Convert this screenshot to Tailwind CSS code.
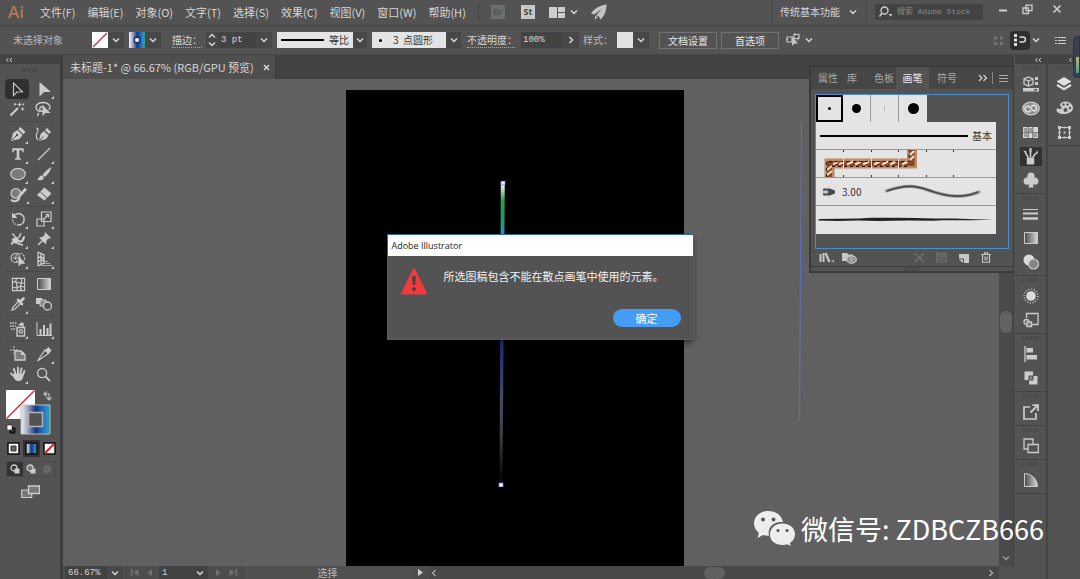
<!DOCTYPE html>
<html lang="zh-CN">
<head>
<meta charset="utf-8">
<meta name="viewport" content="width=device-width, initial-scale=1">
<title>Adobe Illustrator</title>
<script src="https://cdn.jsdelivr.net/npm/@tailwindcss/browser@4"></script>
</head>
<body class="flex h-screen flex-col overflow-hidden bg-[#535353] font-['Noto_Sans_CJK_SC',sans-serif] text-[10px] leading-4 text-[#d6d6d6]">

<svg class="absolute size-0" aria-hidden="true">
  <defs>
    <linearGradient id="g-gray" x1="0" x2="1"><stop offset="0" stop-color="#4a4a4a"/><stop offset="1" stop-color="#d8d8d8"/></linearGradient>
    <linearGradient id="g-blue" x1="0" x2="1"><stop offset="0" stop-color="#f2f2f2"/><stop offset=".2" stop-color="#a9b4c6"/><stop offset=".5" stop-color="#16377e"/><stop offset=".8" stop-color="#2a78c8"/><stop offset=".92" stop-color="#2a94cc"/><stop offset="1" stop-color="#1eaa5c"/></linearGradient>
    <linearGradient id="g-rope" x1="0" y1="0" x2="0" y2="1"><stop offset="0" stop-color="#fff"/><stop offset=".06" stop-color="#2a9a50"/><stop offset=".1" stop-color="#1f9c5a"/><stop offset=".17" stop-color="#2a8fc4"/><stop offset=".4" stop-color="#2458a8"/><stop offset=".55" stop-color="#1f2f73"/><stop offset=".72" stop-color="#474a66"/><stop offset=".85" stop-color="#3c3c3f"/><stop offset=".97" stop-color="#0a0a0a"/></linearGradient>
  </defs>
  <symbol id="chev" viewBox="0 0 10 10"><path d="M2 3.500l3 3 3-3" fill="none" stroke="currentColor" stroke-width="1.500"/></symbol>
  <symbol id="chev-r" viewBox="0 0 10 10"><path d="M3.500 2l3 3-3 3" fill="none" stroke="currentColor" stroke-width="1.500"/></symbol>
  <symbol id="chev-l" viewBox="0 0 10 10"><path d="M6.500 2l-3 3 3 3" fill="none" stroke="currentColor" stroke-width="1.300"/></symbol>
  <symbol id="dbl" viewBox="0 0 10 6"><path d="M4.500 1l-2 2 2 2M8 1L6 3l2 2" fill="none" stroke="currentColor"/></symbol>
  <symbol id="grip" viewBox="0 0 16 4"><path d="M0 1h16M0 3h16" stroke="#3c3c3c" stroke-dasharray="1 1"/></symbol>
  <symbol id="tri" viewBox="0 0 4 4"><path d="M4 0v4H0z" fill="currentColor"/></symbol>

  <symbol id="t-sel" viewBox="0 0 16 16"><path d="M4.500 2v12.500l3.500-3.500 5.500-.2z" fill="none" stroke="currentColor" stroke-width="1.100"/></symbol>
  <symbol id="t-dir" viewBox="0 0 16 16"><path d="M3.500 1v14.500l4.500-4.500h7z" fill="currentColor"/></symbol>
  <symbol id="t-wand" viewBox="0 0 16 16"><path d="M1.500 14.500L9 7" stroke="currentColor" stroke-width="2.200"/><path d="M10.500 1.500v4M8.500 3.500h4M13.500 6.500v3M12 8h3M6 2v2.600M4.700 3.300h2.600M13.500 2.500l1.500 1.500" stroke="currentColor" stroke-width="1.100"/></symbol>
  <symbol id="t-lasso" viewBox="0 0 16 16"><path d="M4 12c-1 1-2 2-1 3M8 10c-5 1-7-1-7-4 0-3 4-4.500 7-4.500S15 3 15 6c0 1-.5 2-1.500 2.500M5.500 10.500c-2-3 0-5.500 3-5" fill="none" stroke="currentColor" stroke-width="1.400"/><path d="M7.500 4v11l3-3H15.500z" fill="currentColor"/></symbol>
  <symbol id="t-pen" viewBox="0 0 16 16"><path d="M1 15l2-8 4.500-3L12.500 9 9.500 13z" fill="currentColor"/><path d="M8.300 3.200L10.500 1 15.500 6l-2.200 2.200z" fill="currentColor"/><path d="M1.500 14.500l5-5" stroke="#535353" stroke-width="1"/><circle cx="7" cy="9" r="1.200" fill="#535353"/></symbol>
  <symbol id="t-curv" viewBox="0 0 16 16"><path d="M4 15l1.500-7 3.500-3 4.500 4.500-2.500 3.500z" fill="currentColor"/><path d="M10 4l2-2 4 4-2 2z" fill="currentColor"/><path d="M4.500 14.500l4-4" stroke="#535353"/><path d="M1 2c3 0 2 3 1 5s-1 5 1 7" fill="none" stroke="currentColor" stroke-width="1.200"/></symbol>
  <symbol id="t-type" viewBox="0 0 16 16"><path d="M1.500 1.500h13v4.500h-1.500L12.500 3.700H9.500v9l2 .5v1.300h-7v-1.300l2-.5v-9H3.500L3 6H1.500z" fill="currentColor"/></symbol>
  <symbol id="t-line" viewBox="0 0 16 16"><path d="M2 14L14 2" stroke="currentColor" stroke-width="1.300"/></symbol>
  <symbol id="t-ell" viewBox="0 0 16 16"><ellipse cx="8" cy="8" rx="7.300" ry="5.700" fill="#7c7c7c" stroke="currentColor" stroke-width="1.200"/></symbol>
  <symbol id="t-brush" viewBox="0 0 16 16"><path d="M15.500 1c-3 1.500-6.500 4.500-9 8l2.500 2c3-3 5.500-6 6.500-10z" fill="currentColor"/><path d="M6 9.500c-3-.5-2.500 3-5 4 2 1.500 6.500 1 7-2z" fill="currentColor"/></symbol>
  <symbol id="t-shaper" viewBox="0 0 16 16"><circle cx="5.500" cy="7" r="4.500" fill="#7c7c7c" stroke="currentColor" stroke-width="1.200"/><path d="M15 2.500L8 10.500" stroke="currentColor" stroke-width="2.600"/><path d="M1 13c3 2 6 2 8-2" fill="none" stroke="currentColor" stroke-width="2"/></symbol>
  <symbol id="t-eraser" viewBox="0 0 16 16"><path d="M8.500 1.500L15.500 7.500 8.500 14.500 1 9z" fill="currentColor"/><path d="M4.500 6l6.500 5.800" stroke="#535353" stroke-width="1"/></symbol>
  <symbol id="t-rot" viewBox="0 0 16 16"><path d="M3.500 5.500A5.700 5.700 0 1 1 8 14" fill="none" stroke="currentColor" stroke-width="1.500"/><path d="M8 14a5.700 5.700 0 0 1-5.500-6" fill="none" stroke="currentColor" stroke-width="1.500" stroke-dasharray="1.200 1.200"/><path d="M2 1.500v5.500h5.500z" fill="currentColor"/></symbol>
  <symbol id="t-scale" viewBox="0 0 16 16"><path d="M5.500 1h9.500v9.500H5.500zM1 8h7v7H1z" fill="none" stroke="currentColor" stroke-width="1.200"/><path d="M8 8l4-4M9.500 3.500h3v3" fill="none" stroke="currentColor" stroke-width="1.200"/></symbol>
  <symbol id="t-warp" viewBox="0 0 16 16"><path d="M1 13c3-1 2-4 5-4s3 3 6 1 0-4 3-4" fill="none" stroke="currentColor" stroke-width="2.200"/><path d="M2 3c3 0 2 4 5 4s3-3 4-5M2 8c3 1 3 5 11 6" fill="none" stroke="currentColor" stroke-width="1.500"/><circle cx="5.500" cy="9.500" r="3" fill="currentColor"/></symbol>
  <symbol id="t-pin" viewBox="0 0 16 16"><path d="M9 1l6 6-2.500.5-2 2-.5 4L3 6.500l3.500-.5 2-2z" fill="currentColor"/><path d="M6.500 9.500L2 14" stroke="currentColor" stroke-width="1.500"/></symbol>
  <symbol id="t-build" viewBox="0 0 16 16"><circle cx="5.500" cy="7" r="4.500" fill="none" stroke="currentColor" stroke-width="1.100"/><circle cx="10" cy="7" r="4.500" fill="none" stroke="currentColor" stroke-width="1.100" stroke-dasharray="2 1"/><path d="M3 7h6" stroke="currentColor"/><path d="M8.500 5v10.500l2.800-2.800H15.500z" fill="currentColor"/></symbol>
  <symbol id="t-persp" viewBox="0 0 16 16"><path d="M2 1v14M2 1l6 3v8l-6 3M5 2.500v11M2 6l6 1M2 10.500L8 9" fill="none" stroke="currentColor" stroke-width="1.300"/><path d="M8 10.500h4M7 12.500h7M5 14.500h11" stroke="currentColor" stroke-width="1" stroke-opacity=".7"/></symbol>
  <symbol id="t-mesh" viewBox="0 0 16 16"><path d="M1.500 1.500h13v13h-13zM1.500 6c4-3 8 3 13 0M1.500 11c4 2 8-3 13 0M6 1.500c-3 4 3 8 0 13M11 1.500c2 4-3 8 0 13" fill="none" stroke="currentColor" stroke-width="1.200"/></symbol>
  <symbol id="t-grad" viewBox="0 0 16 16"><path d="M1.500 2.500h13v11h-13z" fill="url(#g-gray)" stroke="currentColor" stroke-width="1"/></symbol>
  <symbol id="t-eye" viewBox="0 0 16 16"><path d="M2 14l1-3 6-6 2 2-6 6z" fill="none" stroke="currentColor" stroke-width="1.200"/><path d="M8 4l4 4M10.500 5.500l3-3" stroke="currentColor" stroke-width="2.600" stroke-linecap="round"/></symbol>
  <symbol id="t-blend" viewBox="0 0 16 16"><path d="M0 2h6v6H0z" fill="currentColor"/><path d="M4 4h6v6H4z" fill="#8a8a8a" stroke="currentColor"/><circle cx="11.500" cy="10" r="4" fill="#535353" stroke="currentColor" stroke-width="1.300"/></symbol>
  <symbol id="t-spray" viewBox="0 0 16 16"><path d="M7 6.500h7.500V15H7zM8.500 4h4.500v2M10 2.500h3V4" fill="none" stroke="currentColor" stroke-width="1.400"/><circle cx="10.800" cy="10.500" r="1.600" fill="none" stroke="currentColor" stroke-width="1.200"/><path d="M0 2h7M0 5h6M1 8h4" stroke="currentColor" stroke-width="1.500" stroke-dasharray="1.500 1"/></symbol>
  <symbol id="t-graph" viewBox="0 0 16 16"><path d="M1 1v13.500h15" fill="none" stroke="currentColor"/><path d="M4.500 14V8M8 14V4M11.500 14V7M14.500 14V2.500" stroke="currentColor" stroke-width="2"/></symbol>
  <symbol id="t-art" viewBox="0 0 16 16"><path d="M4 0v9M0 4h8" stroke="currentColor" stroke-dasharray="2 1"/><path d="M5 5h6l4 3.500V14H5z" fill="#7c7c7c" stroke="currentColor" stroke-width="1.300"/><path d="M11 5v4h4" fill="currentColor"/></symbol>
  <symbol id="t-slice" viewBox="0 0 16 16"><path d="M1.500 15L9 4l3.500 3.500z" fill="none" stroke="currentColor" stroke-width="1.200"/><path d="M9.500 4l3-3 3 3.500-2.500 3z" fill="currentColor"/></symbol>
  <symbol id="t-hand" viewBox="0 0 16 16"><path d="M4 10L1 7.500M5.500 8L4 3M8 8V1.500M10.300 8l1.200-5.500M12.500 9.500l2-4.500" stroke="currentColor" stroke-width="1.900" stroke-linecap="round"/><path d="M4.500 7.500L13.500 8c0 4-1.500 7-4 7H7.500C5.500 15 4 12 2.500 9.500z" fill="currentColor"/></symbol>
  <symbol id="t-zoom" viewBox="0 0 16 16"><circle cx="6.500" cy="6.500" r="4.900" fill="none" stroke="currentColor" stroke-width="1.400"/><path d="M10 10l5 5" stroke="currentColor" stroke-width="2"/></symbol>
</svg>

<!-- Menu bar -->
<header class="flex h-[26px] shrink-0 items-center border-b border-[#454545] pb-px pl-2 text-[11px]">
  <span class="w-8 font-['Open_Sans'] text-[17px] font-semibold text-[#b07a58]">Ai</span>
  <nav class="flex gap-3 whitespace-nowrap" aria-label="主菜单">
    <button>文件(F)</button><button>编辑(E)</button><button>对象(O)</button><button>文字(T)</button><button>选择(S)</button><button>效果(C)</button><button>视图(V)</button><button>窗口(W)</button><button>帮助(H)</button>
  </nav>
  <span class="ml-3 h-4 w-px bg-[#474747]"></span>
  <button class="ml-3 h-[14px] w-[14px] bg-[#6e6e6e] text-center font-['Open_Sans'] text-[9px] leading-[14px] font-semibold text-[#505050]">Br</button>
  <button class="ml-4 h-[14px] w-[14px] bg-[#c9c9c9] text-center font-['Open_Sans'] text-[9px] leading-[14px] font-bold text-[#454545]">St</button>
  <button class="ml-[14px] flex items-center gap-1" aria-label="排列文档">
    <svg class="h-[11px] w-4 text-[#cfcfcf]" viewBox="0 0 16 11"><path d="M0 0h8v11H0zM9 0h7v5H9zM9 6h7v5H9z" fill="currentColor"/></svg>
    <svg class="size-[10px]"><use href="#chev"/></svg>
  </button>
  <button class="ml-3" aria-label="GPU 性能"><svg class="size-4 text-[#c4c4c4]" viewBox="0 0 16 16"><path d="M15.500.5C10 1 3 4.500 0 9.500l3.500 1L11 4.500 5 11.500l3 1 1.500 3C13.500 12 15.500 6 15.500.500z" fill="currentColor"/><path d="M4 12l3 1-3 2.500z" fill="currentColor"/></svg></button>
  <div class="ml-auto flex items-center">
    <span class="h-6 w-px bg-[#484848]"></span>
    <label class="ml-2 flex items-center text-[10px]">
      <select class="w-[68px] appearance-none bg-transparent" aria-label="工作区"><option>传统基本功能</option></select>
      <svg class="size-[10px]"><use href="#chev"/></svg>
    </label>
    <span class="ml-2 h-6 w-px bg-[#484848]"></span>
    <label class="ml-2 flex h-4 w-[108px] items-center bg-[#434343] pl-1">
      <svg class="h-3 w-[14px] shrink-0 text-[#d0d0d0]" viewBox="0 0 14 12"><circle cx="5.500" cy="4.500" r="3.500" fill="none" stroke="currentColor" stroke-width="1.300"/><path d="M3 7L.5 10.500" stroke="currentColor" stroke-width="1.500"/><path d="M9.500 8h4l-2 2.500z" fill="currentColor"/></svg>
      <input class="ml-1 w-[82px] bg-transparent font-['Liberation_Mono','Noto_Sans_CJK_SC',monospace] text-[8px] placeholder:text-[#8a8a8a]" type="text" aria-label="搜索" placeholder="搜索 Adobe Stock">
    </label>
    <div class="mr-[5px] ml-2 flex h-[18px] items-center self-start text-[#cfcfcf]">
      <button class="w-6" aria-label="最小化"><svg class="mx-auto size-[10px]" viewBox="0 0 10 10"><path d="M1 6.500h8" stroke="currentColor" stroke-width="2"/></svg></button>
      <button class="w-6" aria-label="还原"><svg class="mx-auto size-[11px]" viewBox="0 0 11 11"><path d="M4 1.200h6v5.500H4zM1 4h5.500v5.500H1z" fill="none" stroke="currentColor" stroke-width="1.300"/></svg></button>
      <button class="w-9" aria-label="关闭"><svg class="mx-auto size-[10px]" viewBox="0 0 10 10"><path d="M1.500 1.500l7 7M8.500 1.500l-7 7" stroke="currentColor" stroke-width="1.600"/></svg></button>
    </div>
  </div>
</header>

<!-- Control bar -->
<section class="flex h-[29px] shrink-0 items-center whitespace-nowrap border-b border-[#484848] pl-[13px]" aria-label="控制栏">
  <span class="w-[79px] text-[#b9b9b9]">未选择对象</span>
  <button class="flex h-4 items-center" aria-label="填色">
    <svg class="h-4 w-4" viewBox="0 0 16 16"><path d="M0 0h16v16H0z" fill="#fff"/><path d="M1 15L15 1" stroke="#d22a3c" stroke-width="1.300"/></svg>
    <span class="flex h-4 w-4 items-center justify-center bg-[#484848]"><svg class="size-[10px]"><use href="#chev"/></svg></span>
  </button>
  <button class="ml-[5px] flex h-4 items-center" aria-label="描边颜色">
    <svg class="h-4 w-4" viewBox="0 0 16 16"><path d="M0 0h16v16H0z" fill="url(#g-blue)"/><path d="M5.500 5.500h5v5h-5z" fill="#fff" stroke="#1b2f6b" stroke-width="1.500"/></svg>
    <span class="flex h-4 w-4 items-center justify-center bg-[#484848]"><svg class="size-[10px]"><use href="#chev"/></svg></span>
  </button>
  <label for="weight" class="ml-[11px] w-[30px] border-b border-dotted border-[#a8a8a8] leading-[14px]">描边：</label>
  <div class="ml-1 flex h-4 items-center bg-[#484848]">
    <svg class="h-4 w-3" viewBox="0 0 12 16"><path d="M3 5.500l3-3 3 3M3 10.500l3 3 3-3" fill="none" stroke="currentColor" stroke-width="1.400"/></svg>
    <input id="weight" class="h-4 w-[38px] bg-[#434343] pl-[3px] font-['Liberation_Mono',monospace] text-[9px]" value="3 pt">
    <button class="flex h-4 w-4 items-center justify-center" aria-label="描边粗细列表"><svg class="size-[10px]"><use href="#chev"/></svg></button>
  </div>
  <button class="ml-[5px] flex h-4 items-center" aria-label="变量宽度配置文件">
    <span class="flex h-4 w-[76px] items-center justify-between bg-[#e4e4e4] px-1 text-[#333]"><i class="h-[2px] w-[43px] bg-black"></i>等比</span>
    <span class="flex h-4 w-[14px] items-center justify-center bg-[#484848]"><svg class="size-[10px]"><use href="#chev"/></svg></span>
  </button>
  <button class="ml-[5px] flex h-4 items-center" aria-label="画笔定义">
    <span class="flex h-4 w-[74px] items-center bg-[#e4e4e4] pl-[7px] text-[#333]"><i class="size-[3px] rounded-full bg-black"></i><span class="ml-[11px]">3&nbsp; 点圆形</span></span>
    <span class="flex h-4 w-[15px] items-center justify-center bg-[#484848]"><svg class="size-[10px]"><use href="#chev"/></svg></span>
  </button>
  <label for="opacity" class="ml-[6px] w-12 border-b border-dotted border-[#a8a8a8] leading-[14px]">不透明度：</label>
  <div class="ml-[6px] flex h-4 items-center bg-[#484848]">
    <input id="opacity" class="h-4 w-[42px] bg-[#434343] pl-[2px] font-['Liberation_Mono',monospace] text-[9px]" value="100%">
    <button class="flex h-4 w-4 items-center justify-center" aria-label="不透明度滑块"><svg class="size-[10px]"><use href="#chev-r"/></svg></button>
  </div>
  <span class="ml-1 w-[34px] text-[#bcbcbc]">样式：</span>
  <button class="flex h-4 items-center" aria-label="图形样式">
    <span class="h-4 w-4 bg-[#e2e2e2]"></span>
    <span class="flex h-4 w-4 items-center justify-center bg-[#484848]"><svg class="size-[10px]"><use href="#chev"/></svg></span>
  </button>
  <button class="ml-[10px] h-[17px] w-[58px] border border-[#727272] leading-[15px] text-[#e6e6e6]">文档设置</button>
  <button class="ml-1 h-[17px] w-[58px] border border-[#727272] leading-[15px] text-[#e6e6e6]">首选项</button>
  <button class="ml-[7px] flex items-center gap-1" aria-label="选择类似的对象">
    <svg class="h-[14px] w-[14px] text-[#c4c4c4]" viewBox="0 0 14 14"><path d="M1 4h5v5H1zM8 1.500h5v4H8zM0 6.500h2M9 0v2M12 4.500v3" fill="none" stroke="currentColor" stroke-width="1.200"/><path d="M6 3v10l2.500-2.500H12z" fill="currentColor"/></svg>
    <svg class="size-[10px]"><use href="#chev"/></svg>
  </button>
  <div class="ml-auto flex items-center pr-[14px]">
    <svg class="size-[11px] text-[#727272]" viewBox="0 0 11 11"><path d="M1 1.500h3v3H1zM7 1.500h3v3H7zM1 7h3v3H1zM7 7h3v3H7z" fill="currentColor"/></svg>
    <button class="ml-[6px] flex h-[19px] w-5 items-center justify-center rounded-sm bg-[#2f2f2f]" aria-label="对齐像素网格"><svg class="h-3 w-3 text-[#e0e0e0]" viewBox="0 0 12 12"><path d="M0 0h3v3H0zM0 4.500h3v3H0zM0 9h3v3H0z" fill="currentColor"/><path d="M5.500 3h3.500a2.300 2.300 0 0 1 0 5H5.500" fill="none" stroke="currentColor" stroke-width="1.500"/></svg></button>
    <svg class="ml-[1px] size-[10px]"><use href="#chev"/></svg>
    <button class="ml-[14px]" aria-label="控制面板菜单"><svg class="h-[9px] w-[11px] text-[#cfcfcf]" viewBox="0 0 11 9"><path d="M0 1.500h2M3 1.500h8M0 4.500h2M3 4.500h8M0 7.500h2M3 7.500h8" stroke="currentColor" stroke-width="1.200"/></svg></button>
  </div>
</section>

<div class="flex min-h-0 flex-1">
  <!-- Tools -->
  <aside class="w-[63px] shrink-0 border-r-[3px] border-[#3d3d3d] text-[#cccccc]" aria-label="工具">
    <div class="flex h-[9px] items-center bg-[#434343] pl-1"><svg class="h-[6px] w-[10px]"><use href="#dbl"/></svg></div>
    <div class="flex h-[15px] items-center justify-center pb-1"><svg class="h-1 w-4"><use href="#grip"/></svg></div>
    <div class="mx-[5px] grid grid-cols-2 gap-x-[2px]">
      <button class="flex h-5 w-6 items-center justify-center rounded-sm bg-[#2f2f2f]" aria-label="选择"><svg class="size-4"><use href="#t-sel"/></svg></button>
      <button class="flex h-5 w-7 items-center justify-center" aria-label="直接选择"><svg class="size-4"><use href="#t-dir"/></svg><svg class="-ml-px size-[3px] self-end"><use href="#tri"/></svg></button>
      <button class="flex h-5 w-6 items-center justify-center" aria-label="魔棒"><svg class="size-4"><use href="#t-wand"/></svg></button>
      <button class="flex h-5 w-6 items-center justify-center" aria-label="套索"><svg class="size-4"><use href="#t-lasso"/></svg></button>
    </div>
    <div class="mx-[5px] mt-[2px] grid grid-cols-2 gap-x-[2px] border-t border-[#4a4a4a] pt-[2px]">
      <button class="flex h-5 w-7 items-center justify-center" aria-label="钢笔"><svg class="size-4"><use href="#t-pen"/></svg><svg class="-ml-px size-[3px] self-end"><use href="#tri"/></svg></button>
      <button class="flex h-5 w-6 items-center justify-center" aria-label="曲率"><svg class="size-4"><use href="#t-curv"/></svg></button>
      <button class="flex h-5 w-7 items-center justify-center" aria-label="文字"><svg class="size-[14px]"><use href="#t-type"/></svg><svg class="size-[3px] self-end"><use href="#tri"/></svg></button>
      <button class="flex h-5 w-7 items-center justify-center" aria-label="直线段"><svg class="size-4"><use href="#t-line"/></svg><svg class="-ml-px size-[3px] self-end"><use href="#tri"/></svg></button>
      <button class="flex h-5 w-7 items-center justify-center" aria-label="椭圆"><svg class="size-4"><use href="#t-ell"/></svg><svg class="-ml-px size-[3px] self-end"><use href="#tri"/></svg></button>
      <button class="flex h-5 w-7 items-center justify-center" aria-label="画笔"><svg class="size-4"><use href="#t-brush"/></svg><svg class="-ml-px size-[3px] self-end"><use href="#tri"/></svg></button>
      <button class="flex h-5 w-7 items-center justify-center" aria-label="Shaper"><svg class="size-[17px]"><use href="#t-shaper"/></svg><svg class="-ml-px size-[3px] self-end"><use href="#tri"/></svg></button>
      <button class="flex h-5 w-7 items-center justify-center" aria-label="橡皮擦"><svg class="size-4"><use href="#t-eraser"/></svg><svg class="-ml-px size-[3px] self-end"><use href="#tri"/></svg></button>
    </div>
    <div class="mx-[5px] mt-[2px] grid grid-cols-2 gap-x-[2px] border-t border-[#4a4a4a] pt-[2px]">
      <button class="flex h-5 w-7 items-center justify-center" aria-label="旋转"><svg class="size-4"><use href="#t-rot"/></svg><svg class="-ml-px size-[3px] self-end"><use href="#tri"/></svg></button>
      <button class="flex h-5 w-7 items-center justify-center" aria-label="比例缩放"><svg class="size-4"><use href="#t-scale"/></svg><svg class="-ml-px size-[3px] self-end"><use href="#tri"/></svg></button>
      <button class="flex h-5 w-7 items-center justify-center" aria-label="宽度"><svg class="size-4"><use href="#t-warp"/></svg><svg class="-ml-px size-[3px] self-end"><use href="#tri"/></svg></button>
      <button class="flex h-5 w-7 items-center justify-center" aria-label="操控变形"><svg class="size-4"><use href="#t-pin"/></svg><svg class="-ml-px size-[3px] self-end"><use href="#tri"/></svg></button>
      <button class="flex h-5 w-7 items-center justify-center" aria-label="形状生成器"><svg class="size-4"><use href="#t-build"/></svg><svg class="-ml-px size-[3px] self-end"><use href="#tri"/></svg></button>
      <button class="flex h-5 w-7 items-center justify-center" aria-label="透视网格"><svg class="size-4"><use href="#t-persp"/></svg><svg class="-ml-px size-[3px] self-end"><use href="#tri"/></svg></button>
    </div>
    <div class="mx-[5px] mt-[2px] grid grid-cols-2 gap-x-[2px] border-t border-[#4a4a4a] pt-[2px]">
      <button class="flex h-5 w-[26px] items-center justify-center" aria-label="网格"><svg class="size-[15px]"><use href="#t-mesh"/></svg></button>
      <button class="flex h-5 w-[26px] items-center justify-center" aria-label="渐变"><svg class="size-4"><use href="#t-grad"/></svg></button>
      <button class="flex h-5 w-7 items-center justify-center" aria-label="吸管"><svg class="size-4"><use href="#t-eye"/></svg><svg class="-ml-px size-[3px] self-end"><use href="#tri"/></svg></button>
      <button class="flex h-5 w-[26px] items-center justify-center" aria-label="混合"><svg class="size-4"><use href="#t-blend"/></svg></button>
    </div>
    <div class="mx-[5px] mt-[2px] grid grid-cols-2 gap-x-[2px] border-t border-[#4a4a4a] pt-[2px]">
      <button class="flex h-5 w-7 items-center justify-center" aria-label="符号喷枪"><svg class="size-4"><use href="#t-spray"/></svg><svg class="-ml-px size-[3px] self-end"><use href="#tri"/></svg></button>
      <button class="flex h-5 w-7 items-center justify-center" aria-label="柱形图"><svg class="size-4"><use href="#t-graph"/></svg><svg class="-ml-px size-[3px] self-end"><use href="#tri"/></svg></button>
    </div>
    <div class="mx-[5px] mt-[2px] grid grid-cols-2 gap-x-[2px] border-t border-[#4a4a4a] pt-[2px]">
      <button class="flex h-5 w-[26px] items-center justify-center" aria-label="画板"><svg class="size-4"><use href="#t-art"/></svg></button>
      <button class="flex h-5 w-7 items-center justify-center" aria-label="切片"><svg class="size-4"><use href="#t-slice"/></svg><svg class="-ml-px size-[3px] self-end"><use href="#tri"/></svg></button>
      <button class="flex h-5 w-7 items-center justify-center" aria-label="抓手"><svg class="size-4"><use href="#t-hand"/></svg><svg class="-ml-px size-[3px] self-end"><use href="#tri"/></svg></button>
      <button class="flex h-5 w-6 items-center justify-center" aria-label="缩放"><svg class="size-[15px]"><use href="#t-zoom"/></svg></button>
    </div>
    <button class="ml-[5px] mt-[5px] block" aria-label="填色和描边">
      <svg class="h-[47px] w-12" viewBox="0 0 48 47">
        <path d="M1 1h29v29H1z" fill="#fff"/><path d="M1.500 29.500L29.500 1.500" stroke="#d22a3c" stroke-width="1.500"/>
        <path d="M16 16h29v29H16z" fill="url(#g-blue)" stroke="#bdbdbd"/><path d="M23.500 23.500h14v14h-14z" fill="#535353" stroke="#b4b4b4" stroke-width="1.500"/>
        <path d="M39 5h5v6M41.500 2.500L39 5l2.500 2.500M41.500 8.500L44 11l2.500-2.500" fill="none" stroke="#c4c4c4" stroke-width="1.100"/>
        <path d="M5.500 39.500h4v4h-4z" fill="none" stroke="#111" stroke-width="2"/><path d="M2 36h5v5H2z" fill="#fff" stroke="#222" stroke-width=".6"/>
      </svg>
    </button>
    <div class="ml-[5px] mt-1 flex gap-[1px]">
      <button class="p-[2px]" aria-label="颜色"><svg class="size-[13px]" viewBox="0 0 13 13"><path d="M1 1h11v11H1z" fill="#fff" stroke="#111" stroke-width="1.500"/><path d="M4 4h5v5H4z" fill="#666" stroke="#333"/></svg></button>
      <button class="bg-[#333] p-[2px]" aria-label="渐变"><svg class="size-[13px]" viewBox="0 0 13 13"><path d="M1 1h11v11H1z" fill="url(#g-blue)" stroke="#111" stroke-width="1.500"/></svg></button>
      <button class="p-[2px]" aria-label="无"><svg class="size-[13px]" viewBox="0 0 13 13"><path d="M1 1h11v11H1z" fill="#fff" stroke="#111" stroke-width="1.500"/><path d="M2 11l9-9" stroke="#e01b24" stroke-width="2"/></svg></button>
    </div>
    <div class="ml-[6px] mt-1 flex w-[50px] border border-[#4a4a4a]">
      <button class="flex h-[14px] w-4 items-center justify-center bg-[#333]" aria-label="正常绘图"><svg class="size-[10px]" viewBox="0 0 10 10"><circle cx="4" cy="4" r="3" fill="none" stroke="#cfcfcf" stroke-width="1.300"/><path d="M4.500 4.500h5v5h-5z" fill="#cfcfcf"/></svg></button>
      <button class="flex h-[14px] w-4 items-center justify-center" aria-label="背面绘图"><svg class="size-[10px]" viewBox="0 0 10 10"><path d="M4.500 4.500h5v5h-5z" fill="#cfcfcf"/><circle cx="4" cy="4" r="3" fill="#777" stroke="#cfcfcf" stroke-width="1.300"/></svg></button>
      <button class="flex h-[14px] w-4 items-center justify-center" aria-label="内部绘图"><svg class="size-[10px]" viewBox="0 0 10 10"><circle cx="5" cy="5" r="3.500" fill="#666" stroke="#707070"/></svg></button>
    </div>
    <button class="mx-auto mt-2 block" aria-label="更改屏幕模式"><svg class="h-[14px] w-[19px]" viewBox="0 0 19 14"><path d="M.7 5h10v7.500H.7z" fill="#777" stroke="#ccc" stroke-width="1.200"/><path d="M7.500 1h11v7.500h-11z" fill="#777" stroke="#ccc" stroke-width="1.400"/></svg></button>
  </aside>

  <!-- Document window -->
  <main class="relative flex min-w-0 flex-1 flex-col">
    <div class="flex h-6 shrink-0 bg-[#424242]">
      <div class="flex w-[213px] items-center justify-between border-r border-[#3a3a3a] bg-[#4f4f4f] pl-[7px] pr-[5px] text-[11px]">
        <span class="whitespace-nowrap">未标题-1* @ 66.67% (RGB/GPU 预览)</span>
        <button aria-label="关闭文档"><svg class="size-[7px]" viewBox="0 0 7 7"><path d="M1 1l5 5M6 1L1 6" stroke="#e0e0e0" stroke-width="1.300"/></svg></button>
      </div>
    </div>
    <div class="flex min-h-0 flex-1">
      <div class="relative min-w-0 flex-1 overflow-hidden bg-[#606060]">
        <div class="absolute top-[11px] bottom-0 left-[283px] w-[338px] bg-black">
          <svg class="absolute top-[91px] left-[150px] h-[306px] w-3" viewBox="0 0 12 306">
            <path d="M4.800 2h4L6.500 303H3.500z" fill="url(#g-rope)"/>
            <path d="M5 0h4v4H5zM3 302h4v4H3z" fill="#f4f4ff" stroke="#6d7fd6" stroke-width=".8"/>
          </svg>
        </div>
        <svg class="absolute top-[42px] left-[735px] h-[300px] w-1" viewBox="0 0 4 300"><path d="M3.500 0L1.500 300" stroke="#5a6fb5" stroke-width="1.200"/></svg>
      </div>
      <div class="flex w-[15px] shrink-0 flex-col items-center justify-end border-r border-[#404040] bg-[#4a4a4a]">
        <div class="mb-[220px] h-[22px] w-3 rounded-full bg-[#626262]"></div>
        <svg class="mb-[3px] size-[10px] text-[#9a9a9a]"><use href="#chev"/></svg>
      </div>
    </div>
    <footer class="flex h-[13px] shrink-0 items-center bg-[#4d4d4d] leading-3">
      <input class="ml-[2px] h-[13px] w-[42px] bg-[#424242] pl-[3px] font-['Liberation_Mono',monospace] text-[9px]" aria-label="缩放级别" value="66.67%">
      <button class="flex h-[13px] w-4 items-center justify-center bg-[#484848]" aria-label="缩放列表"><svg class="size-[10px]"><use href="#chev"/></svg></button>
      <button class="ml-2 text-[#707070]" aria-label="首项"><svg class="h-[7px] w-2" viewBox="0 0 8 7"><path d="M0 0h1.500v7H0zM7.500 0v7L2.500 3.500z" fill="currentColor"/></svg></button>
      <button class="ml-2 text-[#707070]" aria-label="上一项"><svg class="h-[7px] w-[5px]" viewBox="0 0 5 7"><path d="M5 0v7L0 3.500z" fill="currentColor"/></svg></button>
      <label class="ml-[7px] flex h-[13px] w-[49px] items-center bg-[#424242] pr-[3px]">
        <select class="min-w-0 flex-1 appearance-none bg-transparent pl-[3px] font-['Liberation_Mono',monospace] text-[9px]" aria-label="画板导航"><option>1</option></select>
        <svg class="size-[10px]"><use href="#chev"/></svg>
      </label>
      <button class="ml-2 text-[#707070]" aria-label="下一项"><svg class="h-[7px] w-[5px]" viewBox="0 0 5 7"><path d="M0 0v7l5-3.500z" fill="currentColor"/></svg></button>
      <button class="ml-2 text-[#707070]" aria-label="末项"><svg class="h-[7px] w-2" viewBox="0 0 8 7"><path d="M6.500 0H8v7H6.500zM.5 0v7l5-3.500z" fill="currentColor"/></svg></button>
      <span class="ml-2 flex h-[13px] w-[165px] items-center justify-center bg-[#505050] text-[#b8b8b8]">选择</span>
      <button class="ml-2" aria-label="状态栏菜单"><svg class="h-[7px] w-[5px]" viewBox="0 0 5 7"><path d="M0 0v7l5-3.500z" fill="#d0d0d0"/></svg></button>
      <div class="ml-[6px] flex h-[13px] flex-1 items-center bg-[#484848] text-[#a8a8a8]">
        <svg class="size-[10px]"><use href="#chev-l"/></svg>
        <span class="ml-[265px] h-3 w-[21px] rounded-full bg-[#606060]"></span>
        <svg class="ml-auto mr-[3px] size-[10px]"><use href="#chev-r"/></svg>
      </div>
      <span class="h-[13px] w-[15px] bg-[#535353]"></span>
    </footer>

    <!-- Brushes panel -->
    <section class="absolute top-[10px] right-0 w-[205px] border-2 border-r border-[#3b3b3b] bg-[#535353]" aria-label="画笔面板">
      <div class="flex h-[22px] items-center bg-[#464646] pl-[7px] text-[#a6a6a6]" role="tablist">
        <button role="tab" class="w-[29px] text-left">属性</button>
        <button role="tab" class="w-[27px] text-left">库</button>
        <button role="tab" class="w-[22px] text-left">色板</button>
        <button role="tab" aria-selected="true" class="h-[22px] w-[33px] bg-[#535353] text-[#eeeeee]">画笔</button>
        <button role="tab" class="ml-2 w-[20px] text-left">符号</button>
        <button class="ml-[21px]" aria-label="更多面板"><svg class="h-2 w-[10px]" viewBox="0 0 10 8"><path d="M1 1l3 3-3 3M5.500 1l3 3-3 3" fill="none" stroke="#d6d6d6" stroke-width="1.200"/></svg></button>
        <span class="ml-1 h-3 w-px bg-[#858585]"></span>
        <button class="ml-[6px]" aria-label="面板菜单"><svg class="h-2 w-[9px]" viewBox="0 0 9 8"><path d="M0 1.500h9M0 4.500h9M0 7.500h9" stroke="#aaa"/></svg></button>
      </div>
      <div class="mx-1 mt-[5px] h-[155px] border border-[#4a8fcb]">
        <div class="flex h-[27px]">
          <button class="flex h-[27px] w-[27px] items-center justify-center border-2 border-black bg-[#e4e4e4]" aria-label="3 点圆形"><i class="size-[3px] rounded-full bg-black"></i></button>
          <button class="flex h-[27px] w-7 items-center justify-center border-r border-[#999] bg-[#e4e4e4]" aria-label="9 点圆形"><i class="size-[9px] rounded-full bg-black"></i></button>
          <button class="flex h-[27px] w-7 items-center justify-center border-r border-[#999] bg-[#e4e4e4]" aria-label="扁平"><i class="h-[5px] w-px bg-[#bbb]"></i></button>
          <button class="flex h-[27px] w-7 items-center justify-center bg-[#e4e4e4]" aria-label="15 点圆形"><i class="size-[11px] rounded-full bg-black"></i></button>
        </div>
        <div class="mr-3 bg-[#e4e4e4] text-[#333]">
          <button class="flex h-7 w-full items-center justify-between border-b border-[#999] px-1"><i class="h-[2px] w-[148px] bg-black"></i>基本</button>
          <button class="block h-7 w-full border-b border-[#999]" aria-label="图案画笔">
            <svg class="h-[27px] w-[180px]" viewBox="0 0 180 27">
              <path d="M27.500 0v2M55.500 0v2M82.500 0v2M110.500 0v2M137.500 0v2M27.500 25v2M55.500 25v2M82.500 25v2M110.500 25v2M137.500 25v2" stroke="#333"/>
              <path d="M13.500 27V13.500H96V0" fill="none" stroke="#b98b66" stroke-width="10"/>
              <path d="M13.500 27V13.500H96V0" fill="none" stroke="#8a4526" stroke-width="5"/>
              <path d="M11 25l5-4M11 20l5-4M17 14.500l5-3M23 14.500l5-3M31 14.500l6-3M39 14.500l6-3M47 14.500l6-3M58 14.500l6-3M66 14.500l6-3M74 14.500l6-3M86 14.500l6-3M94 10l4-4M94 5l4-4" stroke="#f6e4cc" stroke-width="2"/>
              <path d="M16 16.500h78M10.500 27V11.500H93V0" fill="none" stroke="#3a1208" stroke-dasharray="3 3"/>
              <path d="M27.500 8v11M55.500 8v11M82.500 8v11" stroke="#f3e4cd"/>
            </svg>
          </button>
          <button class="flex h-7 w-full items-center border-b border-[#999] pl-[6px]">
            <svg class="h-2 w-[14px]" viewBox="0 0 14 8"><path d="M1 .5h7l5 2v3l-5 2H1z" fill="#4a4a4a"/><path d="M0 2.500h6v3H0z" fill="#c5c5c5"/></svg>
            <span class="ml-[6px] w-[43px] text-left">3.00</span>
            <svg class="h-4 w-24" viewBox="0 0 96 16"><path d="M1 7c25-9 35-3 48 1s28 7 45 0" fill="none" stroke="#999" stroke-width="3.200" stroke-linecap="round"/><path d="M2 7c25-9 35-3 47 1s28 7 44 0" fill="none" stroke="#4b4b4b" stroke-width="1.800"/></svg>
          </button>
          <button class="block h-7 w-full" aria-label="炭笔画笔">
            <svg class="h-7 w-[180px]" viewBox="0 0 180 28"><path d="M3 13l20-.3 20-.3 12-.6 25 0 20 .3 18 .5 20-.2 20 .8 19 .5-20 .5-30 0-10 .5-25-.3-30 .6-20-.4-20 .3-20-.5z" fill="#222"/></svg>
          </button>
        </div>
      </div>
      <div class="flex h-[17px] items-center pl-2 text-[#c8c8c8]">
        <button aria-label="画笔库菜单"><svg class="h-[11px] w-[15px]" viewBox="0 0 15 11"><path d="M1.500 10V2M4.500 10V1" stroke="currentColor" stroke-width="2"/><path d="M6.500 1l4 9" stroke="currentColor" stroke-width="2.200"/><path d="M12 8.500h3v2z" fill="currentColor"/></svg></button>
        <button class="ml-2" aria-label="库面板"><svg class="h-3 w-[15px]" viewBox="0 0 15 12"><path d="M0 1h5l1 1.500h5V9H0z" fill="currentColor"/><ellipse cx="9.500" cy="7.500" rx="4.800" ry="3.700" fill="#888" stroke="currentColor" stroke-width="1.200"/><circle cx="9.500" cy="7.500" r="1.600" fill="none" stroke="currentColor"/></svg></button>
        <button class="ml-[57px] text-[#757575]" aria-label="移去画笔描边"><svg class="size-[11px]" viewBox="0 0 11 11"><path d="M1 1l9 9M10 1l-9 9" stroke="currentColor" stroke-width="1.200"/></svg></button>
        <button class="ml-[11px] text-[#757575]" aria-label="所选对象的选项"><svg class="size-[11px]" viewBox="0 0 11 11"><path d="M1 1h9v9H1zM1 3h9M3 5h5M3 7.500h5" fill="none" stroke="currentColor" stroke-width="1.200"/></svg></button>
        <button class="ml-3" aria-label="新建画笔"><svg class="size-[10px]" viewBox="0 0 10 10"><path d="M0 1h10v9H5V5.500H0z" fill="currentColor"/><path d="M0 6.500h4V10z" fill="currentColor"/></svg></button>
        <button class="ml-3" aria-label="删除画笔"><svg class="h-[11px] w-[10px]" viewBox="0 0 10 11"><path d="M0 2.500h10M3.500 2V.7h3V2M1.500 3v7.300h7V3M4 4.500v4M6 4.500v4" fill="none" stroke="currentColor" stroke-width="1.100"/></svg></button>
      </div>
      <div class="flex h-[5px] items-center justify-center border-t border-[#3b3b3b]"><svg class="h-1 w-4"><use href="#grip"/></svg></div>
    </section>
  </main>

  <!-- Panel dock, first column -->
  <aside class="w-[33px] shrink-0 border-r border-[#3f3f3f] pl-px text-[#cccccc]" aria-label="面板">
    <div class="flex h-[9px] items-center justify-end bg-[#434343] pr-[3px]"><svg class="h-[6px] w-[10px]"><use href="#dbl"/></svg></div>
    <div class="border-b border-[#424242] pb-px">
      <svg class="mx-auto h-2 w-4"><use href="#grip"/></svg>
      <button class="flex h-6 w-full items-center justify-center" aria-label="属性"><svg class="size-4" viewBox="0 0 16 16"><path d="M5.500 1L10 3v5l-4.500 2L1 8V3zM1 3l4.500 2L10 3M5.500 5v5" fill="none" stroke="currentColor" stroke-width="1.300"/><path d="M12 1h3v3h-3zM12 6h3v3h-3zM0 12h16v3.500H0z" fill="currentColor"/><path d="M11 13h3v1.500h-3z" fill="#535353"/></svg></button>
      <button class="flex h-6 w-full items-center justify-center" aria-label="库"><svg class="h-[15px] w-[18px]" viewBox="0 0 18 15"><ellipse cx="9" cy="7.500" rx="8.300" ry="6.300" fill="#8e8e8e" stroke="currentColor" stroke-width="1.200"/><path d="M9 9.500C7 12 3 11 3 8s4-4 6-.5 5.500 3 5.500-.3S11 3 9 6" fill="none" stroke="#e0e0e0" stroke-width="1.500"/></svg></button>
      <button class="flex h-6 w-full items-center justify-center" aria-label="色板"><svg class="h-[11px] w-[15px]" viewBox="0 0 15 11"><path d="M0 0h15v11H0z" fill="#d6d6d6"/><path d="M1 1h3.500v4H1zM6 1h3v4H6zM1 6.500h3.500V10H1zM10.500 6.500H14V10h-3.500z" fill="#9a9a9a"/><path d="M5.200 0v11M9.800 0v11M0 5.700h15" stroke="#6a6a6a"/></svg></button>
      <button class="mx-auto flex h-6 w-[22px] items-center justify-center" aria-label="画笔"><span class="flex h-[19px] w-[22px] items-center justify-center bg-[#323232]"><svg class="size-[17px]" viewBox="0 0 16 16"><path d="M4.500 9h7v6.500h-7z" fill="currentColor"/><path d="M6 9L3 4M8 9V3M10 9l3-4" stroke="currentColor" stroke-width="1.500"/><path d="M1 2l3 1v3zM7 0h2v4H7zM14.500 2l.5 3-3 1z" fill="currentColor"/></svg></span></button>
      <button class="flex h-6 w-full items-center justify-center" aria-label="符号"><svg class="size-4" viewBox="0 0 16 16"><circle cx="8" cy="4.200" r="3.600" fill="currentColor"/><circle cx="4.200" cy="9.200" r="3.600" fill="currentColor"/><circle cx="11.800" cy="9.200" r="3.600" fill="currentColor"/><path d="M7 7h2l1.500 8.500h-5z" fill="currentColor"/></svg></button>
    </div>
    <div class="border-b border-[#424242] pb-px">
      <svg class="mx-auto h-2 w-4"><use href="#grip"/></svg>
      <button class="flex h-6 w-full items-center justify-center" aria-label="描边"><svg class="h-3 w-[15px]" viewBox="0 0 15 12"><path d="M0 1.500h15" stroke="currentColor"/><path d="M0 5.500h15" stroke="currentColor" stroke-width="2"/><path d="M0 10.500h15" stroke="currentColor" stroke-width="2.500"/></svg></button>
      <button class="flex h-6 w-full items-center justify-center" aria-label="渐变"><svg class="size-4"><use href="#t-grad"/></svg></button>
      <button class="flex h-6 w-full items-center justify-center" aria-label="透明度"><svg class="size-4" viewBox="0 0 16 16"><circle cx="6" cy="6" r="5.500" fill="#dadada"/><circle cx="10.500" cy="10" r="5" fill="#858585" stroke="#cfcfcf" stroke-width="1.200"/></svg></button>
    </div>
    <div class="border-b border-[#424242] pb-px">
      <svg class="mx-auto h-2 w-4"><use href="#grip"/></svg>
      <button class="flex h-6 w-full items-center justify-center" aria-label="外观"><svg class="size-4" viewBox="0 0 16 16"><circle cx="8" cy="8" r="4.800" fill="#dcdcdc"/><circle cx="8" cy="8" r="6.900" fill="none" stroke="currentColor" stroke-width="1.200" stroke-dasharray="1.200 1.500"/></svg></button>
      <button class="flex h-6 w-full items-center justify-center" aria-label="图形样式"><svg class="size-4" viewBox="0 0 16 16"><path d="M3.500 6V1.500h11.500v11H9" fill="none" stroke="currentColor" stroke-width="1.300"/><circle cx="3.500" cy="10" r="2.500" fill="#535353" stroke="currentColor" stroke-width="1.300"/><path d="M4 10h4.500v4.500H4z" fill="#777" stroke="currentColor" stroke-width="1.300"/></svg></button>
    </div>
    <div class="border-b border-[#424242] pb-px">
      <svg class="mx-auto h-2 w-4"><use href="#grip"/></svg>
      <button class="flex h-6 w-full items-center justify-center" aria-label="对齐"><svg class="h-4 w-[14px]" viewBox="0 0 14 16"><path d="M1 0v16" stroke="currentColor" stroke-width="1.300"/><path d="M2.500 2H9v4.500H2.500zM2.500 9H13v4.500H2.500z" fill="currentColor"/></svg></button>
      <button class="flex h-6 w-full items-center justify-center" aria-label="路径查找器"><svg class="size-[14px]" viewBox="0 0 14 14"><path d="M.5.500h8.500v8.500H.500zM5 5h8.500v8.500H5z" fill="currentColor"/><path d="M5 5h4v4H5z" fill="#888" stroke="#4a4a4a"/></svg></button>
    </div>
    <div class="border-b border-[#424242] pb-px">
      <svg class="mx-auto h-2 w-4"><use href="#grip"/></svg>
      <button class="flex h-6 w-full items-center justify-center" aria-label="资源导出"><svg class="size-4" viewBox="0 0 16 16"><path d="M7 3H1v12h12V9" fill="none" stroke="currentColor" stroke-width="1.700"/><path d="M7.500 8.500L14 2M9.500 1.200h5.500V7" fill="none" stroke="currentColor" stroke-width="1.800"/></svg></button>
    </div>
    <div class="border-b border-[#424242] pb-px">
      <svg class="mx-auto h-2 w-4"><use href="#grip"/></svg>
      <button class="flex h-6 w-full items-center justify-center" aria-label="画板"><svg class="size-4" viewBox="0 0 16 16"><path d="M1 1h9v10H1z" fill="none" stroke="currentColor" stroke-width="1.300"/><path d="M5 6.500h10.300v8H5z" fill="#535353" stroke="currentColor" stroke-width="1.300"/></svg></button>
    </div>
    <div class="border-b border-[#424242] pb-px">
      <svg class="mx-auto h-2 w-4"><use href="#grip"/></svg>
      <button class="flex h-6 w-full items-center justify-center" aria-label="颜色参考"><svg class="size-[14px]" viewBox="0 0 14 14"><path d="M.5.500A13 13 0 0 1 13.500 13.500H.500z" fill="url(#g-gray)" stroke="currentColor"/></svg></button>
    </div>
  </aside>

  <!-- Panel dock, second column -->
  <aside class="w-[33px] shrink-0 border-l border-[#4a4a4a] text-[#cccccc]" aria-label="图层与颜色">
    <div class="flex h-[9px] items-center justify-end bg-[#434343] pr-[3px]"><svg class="h-[6px] w-[10px]"><use href="#dbl"/></svg></div>
    <div class="border-b border-[#424242] pb-px">
      <svg class="mx-auto h-2 w-4"><use href="#grip"/></svg>
      <button class="flex h-6 w-full items-center justify-center" aria-label="图层"><svg class="size-4" viewBox="0 0 16 16"><path d="M8 1l7.500 4.500L8 10 .5 5.500z" fill="#dedede"/><path d="M1 9l7 4.200L15 9" fill="none" stroke="#dedede" stroke-width="2.200"/></svg></button>
      <button class="flex h-6 w-full items-center justify-center" aria-label="颜色"><svg class="h-[14px] w-[17px]" viewBox="0 0 17 14"><path d="M9 .5c5 0 8 3 8 6.500S13 13 8 13 .5 11 .5 9 2 7.500 4 8s2-2 .5-3S5 .5 9 .500z" fill="currentColor"/><circle cx="7.500" cy="3.500" r="1.200" fill="#535353"/><circle cx="11.500" cy="3.500" r="1.200" fill="#535353"/><circle cx="14" cy="7" r="1.200" fill="#535353"/><circle cx="9.500" cy="9" r="2" fill="#535353"/></svg></button>
      <button class="flex h-6 w-full items-center justify-center" aria-label="变换"><svg class="size-[15px]" viewBox="0 0 15 15"><path d="M2.500 2.500h10v10h-10z" fill="none" stroke="currentColor" stroke-width="1.200"/><path d="M1 1h3v3H1zM11 1h3v3h-3zM1 11h3v3H1zM11 11h3v3h-3zM6.500 1.500h2v2h-2zM6.500 11.500h2v2h-2zM1.500 6.500h2v2h-2zM11.500 6.500h2v2h-2zM6.500 6.500h2v2h-2z" fill="currentColor"/></svg></button>
    </div>
  </aside>
</div>

<!-- Level meter peeking in from the screen edge -->
<div class="absolute top-9 right-0 flex h-[42px] w-[7px] items-end rounded-l-sm border border-[#2f3347] bg-[#3a3e50] pb-1 pl-[2px]"><i class="h-4 w-[3px] bg-linear-to-b from-[#b8b868] to-[#3fa08c]"></i></div>

<!-- Alert -->
<div class="pointer-events-none absolute inset-0 grid place-items-center pb-[5px]">
  <div role="alertdialog" aria-labelledby="dlg-title" aria-describedby="dlg-text" class="pointer-events-auto w-[307px] border border-[#2b6c9c] bg-[#535353] shadow-md shadow-black/40">
    <h1 id="dlg-title" class="h-[21px] bg-white pl-1 font-['Open_Sans'] text-[9px] leading-[21px] text-[#222]">Adobe Illustrator</h1>
    <div class="flex items-start pt-[11px] pl-[13px]">
      <svg class="mt-px h-[27px] w-[26px]" viewBox="0 0 26 27"><path d="M13 1.500L25 25.500H1z" fill="#f03b3f" stroke="#f03b3f" stroke-width="2" stroke-linejoin="round"/><path d="M11.200 8h3.600l-.6 9h-2.400z" fill="#4a4040"/><circle cx="13" cy="21" r="1.900" fill="#4a4040"/></svg>
      <p id="dlg-text" class="ml-[17px] pt-px text-[11px] leading-4 text-[#f2f2f2]">所选图稿包含不能在散点画笔中使用的元素。</p>
    </div>
    <div class="flex justify-end pt-[14px] pr-3 pb-3">
      <button class="h-[18px] w-[68px] rounded-full bg-[#449cf5] text-[11px] leading-[18px] text-white">确定</button>
    </div>
  </div>
</div>

<!-- Watermark -->
<div class="pointer-events-none absolute right-9 bottom-8 flex items-center gap-[5px] text-white">
  <svg class="h-[37px] w-[43px]" viewBox="0 0 43 37"><path d="M15 1C7 1 1 6.500 1 13.500c0 4 2 7 5 9.500l-1.500 5 5.500-3c2 .5 4 .8 6 .7C14 17 21 11 30 12 29 5.500 23 1 15 1z" fill="#ededed"/><path d="M29.500 13C22 13 16.500 18 16.500 24.500S22 35.500 29.500 35.500c1.500 0 3-.2 4.500-.7l4.500 2-1-3.800c3-2 5-5 5-8.500C42.500 18 37 13 29.500 13z" fill="#ededed" stroke="#5c5c5c"/><circle cx="10" cy="9.500" r="1.900" fill="#555"/><circle cx="20.500" cy="9.500" r="1.900" fill="#555"/><circle cx="25" cy="20.500" r="1.600" fill="#555"/><circle cx="34" cy="20.500" r="1.600" fill="#555"/></svg>
  <span class="text-[27px] leading-9 whitespace-nowrap">微信号: ZDBCZB666</span>
</div>
</body>
</html>
